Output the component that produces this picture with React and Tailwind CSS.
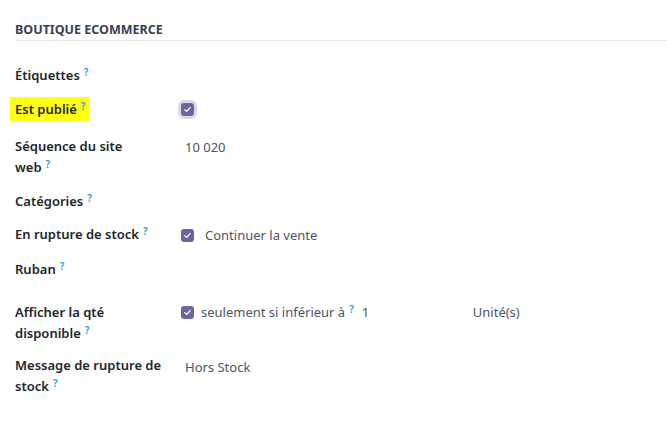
const ROWS = [
  { key: "tags", label: ["Étiquettes"], height: "h-[34px]" },
  { key: "published", label: ["Est publié"], height: "h-[37px]", highlight: true, value: "halo" },
  { key: "sequence", label: ["Séquence du site", "web"], height: "h-[55px]", value: "sequence" },
  { key: "categories", label: ["Catégories"], height: "h-[33px]" },
  { key: "oos", label: ["En rupture de stock"], height: "h-[35px]", value: "continue" },
  { key: "ribbon", label: ["Ruban"], height: "h-[43px]" },
  { key: "qty", label: ["Afficher la qté", "disponible"], height: "h-[53px]", value: "qty" },
  { key: "message", label: ["Message de rupture de", "stock"], height: "h-[60px]", value: "message" },
];

function Hint() {
  return <sup className="relative -top-[4px] ml-[4px] text-[10px] font-semibold text-[#1f9fc7]">?</sup>;
}

function Check({ halo }) {
  return (
    <span
      className={
        halo
          ? "flex h-[13px] w-[13px] items-center justify-center rounded-[3px] bg-[#71639e] ring-[3px] ring-[#dcd8e6]"
          : "flex h-[13px] w-[13px] items-center justify-center rounded-[3px] bg-[#71639e]"
      }
    >
      <svg viewBox="0 0 12 12" className="h-[9px] w-[9px]">
        <path d="M2.5 6.2 L5 8.5 L9.5 3.5" fill="none" stroke="white" strokeWidth="1.8" strokeLinecap="round" strokeLinejoin="round" />
      </svg>
    </span>
  );
}

function FieldValue({ kind }) {
  if (kind === "halo") {
    return (
      <div className="pl-[1px] pt-[4px]">
        <Check halo />
      </div>
    );
  }
  if (kind === "sequence") {
    return <div className="pl-[5px] pt-[1px] text-[#4b5563]">10 020</div>;
  }
  if (kind === "continue") {
    return (
      <div className="flex items-center pl-[1px] pt-[1px]">
        <Check />
        <span className="ml-[11px] text-[#4b5563]">Continuer la vente</span>
      </div>
    );
  }
  if (kind === "qty") {
    return (
      <div className="flex items-center pl-[1px]">
        <Check />
        <span className="ml-[7px] text-[#4b5563]">seulement si inférieur à</span>
        <Hint />
        <span className="ml-[8px] w-[111px] text-[#4b5563]">1</span>
        <span className="text-[#4b5563]">Unité(s)</span>
      </div>
    );
  }
  if (kind === "message") {
    return <div className="pl-[5px] pt-[2px] text-[#4b5563]">Hors Stock</div>;
  }
  return null;
}

export default function App() {
  return (
    <div className="min-h-screen bg-white pl-[15px] pt-[21px] text-[13px] leading-[21px] text-[#212529]" style={{ fontFamily: '"Noto Sans", "Liberation Sans", sans-serif' }}>
      <div className="border-b border-[#e4e4e4] pb-[1px] text-[12.5px] font-bold uppercase leading-[18px] text-[#374151]">
        Boutique eCommerce
      </div>
      <div className="mt-[24px] flex flex-col">
        {ROWS.map((row) => (
          <div key={row.key} className={`flex items-start ${row.height}`}>
            <div className="w-[165px] shrink-0 font-semibold">
              {row.label.map((line, i) => (
                <div key={i}>
                  {row.highlight ? (
                    <span className="-ml-[5px] bg-[#ffff14] py-[3px] pl-[5px] pr-[4px]">
                      {line}
                      <Hint />
                    </span>
                  ) : (
                    <>
                      {line}
                      {i === row.label.length - 1 ? <Hint /> : null}
                    </>
                  )}
                </div>
              ))}
            </div>
            <FieldValue kind={row.value} />
          </div>
        ))}
      </div>
    </div>
  );
}
